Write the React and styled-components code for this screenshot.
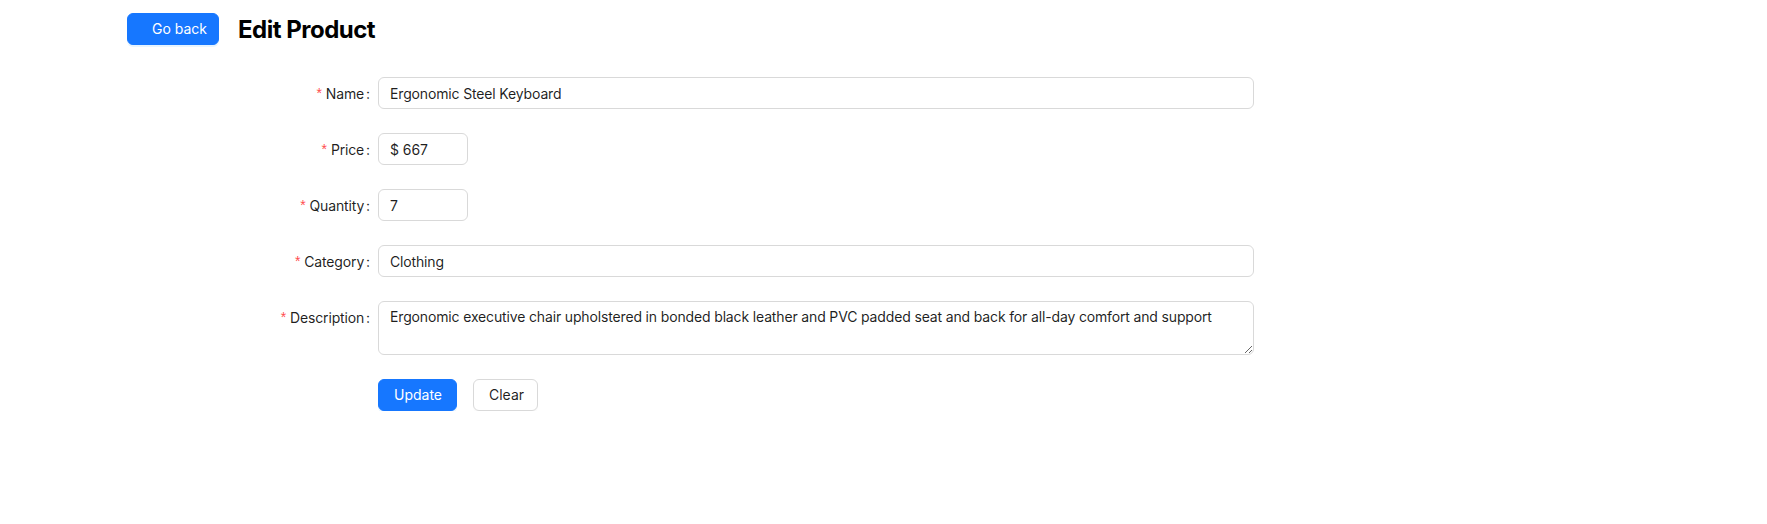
import React from 'react'
import styled, { createGlobalStyle } from 'styled-components';

const GlobalStyle = createGlobalStyle`
  body {
    margin: 0;
    background: #fff;
    font-family: Inter, "Liberation Sans", sans-serif;
    font-size: 14px;
    color: rgba(0, 0, 0, 0.88);
  }
`;

const Page = styled.div`
  padding: 13px 0 0 127px;
`;

const Header = styled.div`
  display: flex;
  align-items: center;
  gap: 19px;
  height: 32px;
  margin-bottom: 32px;
  h2 {
    margin: 0;
    font-size: 24px;
    font-weight: 700;
    color: #000;
    letter-spacing: -0.5px;
  }
`;

const Button = styled.button`
  box-sizing: border-box;
  height: 32px;
  border-radius: 6px;
  font-family: inherit;
  font-size: 14px;
  line-height: 1;
  white-space: nowrap;
  cursor: pointer;
  padding: ${p => p.$pad || '0 15px'};
  width: ${p => p.$w || 'auto'};
  text-align: ${p => p.$align || 'center'};
  border: 1px solid ${p => (p.$primary ? '#1677ff' : '#d9d9d9')};
  background: ${p => (p.$primary ? '#1677ff' : '#fff')};
  color: ${p => (p.$primary ? '#fff' : 'rgba(0, 0, 0, 0.88)')};
  box-shadow: ${p => (p.$primary ? '0 2px 0 rgba(5, 145, 255, 0.1)' : '0 2px 0 rgba(0, 0, 0, 0.02)')};
`;

const Form = styled.form`
  display: grid;
  grid-template-columns: 251px 876px;
  row-gap: 24px;
  letter-spacing: -0.15px;
`;

const Label = styled.label`
  display: flex;
  justify-content: flex-end;
  align-items: center;
  height: 32px;
  white-space: nowrap;
  &::before {
    content: '*';
    color: #ff4d4f;
    font-family: SimSun, "Liberation Sans", sans-serif;
    font-size: 14px;
    margin-right: 4px;
  }
  &::after {
    content: ':';
    margin: 0 8px 0 2px;
  }
`;

const Field = styled.input`
  box-sizing: border-box;
  height: 32px;
  width: ${p => p.$w || '100%'};
  padding: 4px 11px;
  border: 1px solid #d9d9d9;
  border-radius: 6px;
  font-family: inherit;
  font-size: 14px;
  letter-spacing: inherit;
  color: rgba(0, 0, 0, 0.88);
  outline: none;
`;

const Affix = styled.div`
  box-sizing: border-box;
  display: flex;
  align-items: center;
  height: 32px;
  width: 90px;
  padding: 0 11px;
  border: 1px solid #d9d9d9;
  border-radius: 6px;
  span {
    margin-right: 4px;
  }
  input {
    border: 0;
    outline: none;
    width: 100%;
    padding: 0;
    font-family: inherit;
    font-size: 14px;
    letter-spacing: inherit;
    color: rgba(0, 0, 0, 0.88);
  }
`;

const Area = styled.textarea`
  box-sizing: border-box;
  display: block;
  width: 100%;
  height: 54px;
  padding: 4px 11px;
  border: 1px solid #d9d9d9;
  border-radius: 6px;
  font-family: inherit;
  font-size: 14px;
  letter-spacing: inherit;
  line-height: 1.5714;
  color: rgba(0, 0, 0, 0.88);
  resize: vertical;
  outline: none;
`;

const Actions = styled.div`
  grid-column: 2;
  display: flex;
  gap: 16px;
`;

const description = 'Ergonomic executive chair upholstered in bonded black leather and PVC padded seat and back for all-day comfort and support';

export default function App() {
  return (
    <Page>
      <GlobalStyle />
      <Header>
        <Button $primary $w="92px" $pad="0 15px 0 24px" $align="left">Go back</Button>
        <h2>Edit Product</h2>
      </Header>
      <Form onSubmit={e => e.preventDefault()}>
        <Label htmlFor="name">Name</Label>
        <Field id="name" defaultValue="Ergonomic Steel Keyboard" />

        <Label htmlFor="price">Price</Label>
        <Affix>
          <span>$</span>
          <input id="price" defaultValue="667" />
        </Affix>

        <Label htmlFor="quantity">Quantity</Label>
        <Field id="quantity" $w="90px" defaultValue="7" />

        <Label htmlFor="category">Category</Label>
        <Field id="category" defaultValue="Clothing" />

        <Label htmlFor="description">Description</Label>
        <Area id="description" defaultValue={description} />

        <Actions>
          <Button $primary $w="79px" type="submit">Update</Button>
          <Button $w="65px" type="button">Clear</Button>
        </Actions>
      </Form>
    </Page>
  );
}
